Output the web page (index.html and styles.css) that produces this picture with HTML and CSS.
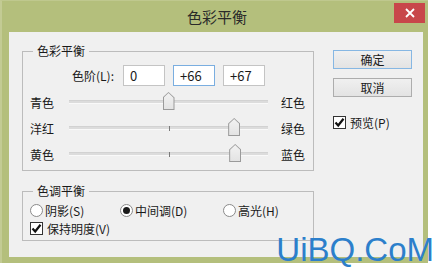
FILE: index.html
```html
<!DOCTYPE html>
<html>
<head>
<meta charset="utf-8">
<link rel="stylesheet" href="styles.css">
</head>
<body>
<div class="window">
  <div class="titlebar">
    <div class="title">色彩平衡</div>
    <div class="close"><svg width="10" height="10" viewBox="0 0 10 10"><path d="M1 1 L9 9 M9 1 L1 9" stroke="#fff" stroke-width="1.8" fill="none"/></svg></div>
  </div>
  <div class="client">
    <div class="left">
      <fieldset class="group g1">
        <legend>色彩平衡</legend>
        <div class="levels">
          <span class="lvl-label">色阶(L):</span>
          <div class="input">0</div>
          <div class="input focus">+66</div>
          <div class="input">+67</div>
        </div>
        <div class="srow">
          <span class="sl">青色</span>
          <div class="track"><span class="tick"></span><span class="thumb" style="left:50%"></span></div>
          <span class="sr">红色</span>
        </div>
        <div class="srow">
          <span class="sl">洋红</span>
          <div class="track"><span class="tick"></span><span class="thumb" style="left:83%"></span></div>
          <span class="sr">绿色</span>
        </div>
        <div class="srow">
          <span class="sl">黄色</span>
          <div class="track"><span class="tick"></span><span class="thumb" style="left:83.5%"></span></div>
          <span class="sr">蓝色</span>
        </div>
      </fieldset>
      <fieldset class="group g2">
        <legend>色调平衡</legend>
        <div class="radios">
          <span class="opt"><span class="radio"></span>阴影(S)</span>
          <span class="opt"><span class="radio on"></span>中间调(D)</span>
          <span class="opt"><span class="radio"></span>高光(H)</span>
        </div>
        <div class="opt chk-row"><span class="check"><svg width="11" height="11" viewBox="0 0 11 11"><path d="M1.5 5.5 L4.2 8.5 L9.5 1.8" stroke="#111" stroke-width="2.2" fill="none"/></svg></span>保持明度(V)</div>
      </fieldset>
    </div>
    <div class="right">
      <div class="btn default">确定</div>
      <div class="btn">取消</div>
      <div class="opt preview"><span class="check"><svg width="11" height="11" viewBox="0 0 11 11"><path d="M1.5 5.5 L4.2 8.5 L9.5 1.8" stroke="#111" stroke-width="2.2" fill="none"/></svg></span>预览(P)</div>
    </div>
  </div>
</div>
<div class="watermark">UiBQ.CoM</div>
</body>
</html>
```

FILE: styles.css
```css
html, body {
  margin: 0;
  padding: 0;
  background: #ffffff;
  width: 434px;
  height: 267px;
  overflow: hidden;
  position: relative;
  font-family: "Noto Sans CJK SC", "Noto Sans", sans-serif;
  font-size: 12px;
  color: #1a1a1a;
}

.window {
  width: 428px;
  height: 263px;
  background: #b4bf7c;
  box-sizing: border-box;
  border-left: 2px solid #c3cb94;
  border-top: 1px solid #bfc88e;
  display: flex;
  flex-direction: column;
}

.titlebar {
  height: 31px;
  position: relative;
  display: flex;
  justify-content: center;
  align-items: center;
}

.title {
  font-size: 15px;
  color: #2a2a2a;
  line-height: 18px;
  margin-left: 4px;
  margin-top: 1px;
}

.close {
  position: absolute;
  right: 3px;
  top: 2px;
  width: 31px;
  height: 20px;
  background: #c8474a;
  display: flex;
  align-items: center;
  justify-content: center;
}

.client {
  margin-left: 7px;
  width: 414px;
  height: 225px;
  background: #f0f0f0;
  display: flex;
  box-sizing: border-box;
  padding: 12px 0 0 13px;
}

.left {
  width: 292px;
  display: flex;
  flex-direction: column;
}

.group {
  margin: 0;
  border: 1px solid #bcbcbc;
  padding: 0 0 0 7px;
  min-width: 0;
}

.group legend {
  padding: 0 4px;
  margin-left: 3px;
  line-height: 14px;
  font-size: 12px;
}

.g1 {
  padding-top: 7px;
  padding-bottom: 3px;
}

.levels {
  display: flex;
  align-items: center;
  gap: 8px;
  height: 21px;
  margin-bottom: 3px;
}

.lvl-label {
  width: 84px;
  text-align: right;
  margin-right: 1px;
}

.input {
  width: 42px;
  height: 21px;
  box-sizing: border-box;
  background: #ffffff;
  border: 1px solid #c4c4c4;
  padding-left: 6px;
  line-height: 19px;
  font-size: 13px;
}

.input.focus {
  border-color: #7aaee0;
}

.srow {
  display: grid;
  grid-template-columns: 26px 199px 26px;
  column-gap: 13px;
  align-items: center;
  height: 26px;
}

.track {
  position: relative;
  height: 2px;
  background: #dcdcdc;
  border-bottom: 1px solid #f9f9f9;
  border-top: 1px solid #d2d2d2;
}

.tick {
  position: absolute;
  left: 50%;
  top: -1px;
  width: 1px;
  height: 5px;
  background: #7a7a7a;
}

.thumb {
  position: absolute;
  top: -9px;
  width: 12px;
  height: 18px;
  margin-left: -6px;
  background: #9a9a9a;
  clip-path: polygon(50% 0, 100% 30%, 100% 100%, 0 100%, 0 30%);
}

.thumb::after {
  content: "";
  position: absolute;
  left: 1px;
  top: 1px;
  right: 1px;
  bottom: 1px;
  background: linear-gradient(#f2f2f2, #e3e3e3);
  clip-path: polygon(50% 0, 100% 30%, 100% 100%, 0 100%, 0 30%);
}

.g2 {
  margin-top: 13px;
  padding-top: 3px;
  padding-bottom: 3px;
}

.radios {
  display: grid;
  grid-template-columns: 90px 103px auto;
  height: 18px;
  align-items: center;
}

.opt {
  display: flex;
  align-items: center;
  gap: 2px;
  height: 18px;
}

.radio {
  width: 11px;
  height: 11px;
  border: 1px solid #8a8a8a;
  border-radius: 50%;
  background: #ffffff;
  position: relative;
  flex: none;
}

.radio.on::after {
  content: "";
  position: absolute;
  left: 2px;
  top: 2px;
  width: 7px;
  height: 7px;
  border-radius: 50%;
  background: #1a1a1a;
}

.check {
  width: 11px;
  height: 11px;
  border: 1px solid #333;
  background: #ffffff;
  display: flex;
  align-items: center;
  justify-content: center;
  flex: none;
  margin-right: 2px;
}

.right {
  margin-left: 19px;
  padding-top: 6px;
  display: flex;
  flex-direction: column;
}

.btn {
  width: 79px;
  height: 19px;
  box-sizing: border-box;
  border: 1px solid #adadad;
  background: linear-gradient(#f0f0f0, #e3e3e3);
  text-align: center;
  line-height: 17px;
  margin-bottom: 9px;
}

.btn.default {
  border-color: #86b7e3;
}

.preview {
  margin-top: 7px;
}

.watermark {
  position: absolute;
  right: 0;
  top: 233px;
  font-family: "Liberation Sans", Arial, sans-serif;
  font-size: 33px;
  line-height: 34px;
  color: #2c7fcb;
}
```
